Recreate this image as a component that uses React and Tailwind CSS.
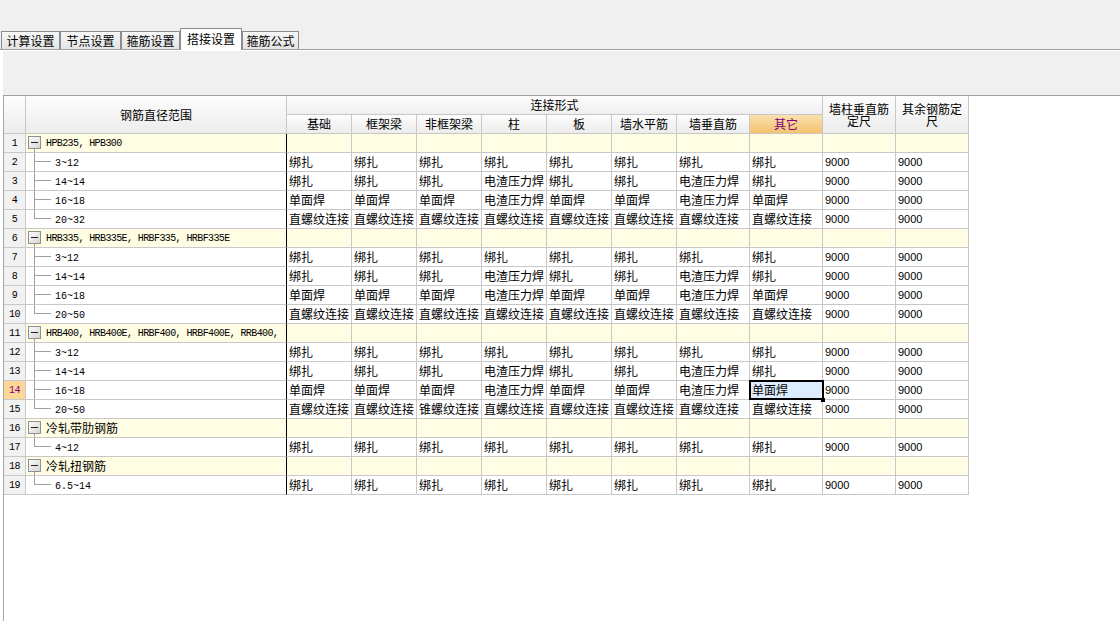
import React from 'react';

const CJK = "font-['Noto_Sans_CJK_SC',sans-serif]";
const COLS = 'grid grid-cols-[22px_261px_65px_65px_65px_65px_65px_65px_73px_73px_73px_73px] w-[965px]';

const B = '绑扎';
const D = '电渣压力焊';
const S = '单面焊';
const Z = '直螺纹连接';

const ROW_3_12 = [B, B, B, B, B, B, B, B];
const ROW_14 = [B, B, B, D, B, B, D, B];
const ROW_16 = [S, S, S, D, S, S, D, S];
const ROW_20 = [Z, Z, Z, Z, Z, Z, Z, Z];

const rows = [
	{ n: 1, group: 'HPB235, HPB300', latin: true },
	{ n: 2, label: '3~12', vals: ROW_3_12 },
	{ n: 3, label: '14~14', vals: ROW_14 },
	{ n: 4, label: '16~18', vals: ROW_16 },
	{ n: 5, label: '20~32', vals: ROW_20, last: true },
	{ n: 6, group: 'HRB335, HRB335E, HRBF335, HRBF335E', latin: true },
	{ n: 7, label: '3~12', vals: ROW_3_12 },
	{ n: 8, label: '14~14', vals: ROW_14 },
	{ n: 9, label: '16~18', vals: ROW_16 },
	{ n: 10, label: '20~50', vals: ROW_20, last: true },
	{ n: 11, group: 'HRB400, HRB400E, HRBF400, HRBF400E, RRB400,', latin: true },
	{ n: 12, label: '3~12', vals: ROW_3_12 },
	{ n: 13, label: '14~14', vals: ROW_14 },
	{ n: 14, label: '16~18', vals: ROW_16, selected: 7 },
	{ n: 15, label: '20~50', vals: [Z, Z, '锥螺纹连接', Z, Z, Z, Z, Z], last: true },
	{ n: 16, group: '冷轧带肋钢筋' },
	{ n: 17, label: '4~12', vals: ROW_3_12, last: true },
	{ n: 18, group: '冷轧扭钢筋' },
	{ n: 19, label: '6.5~14', vals: ROW_3_12, last: true },
];

const tabs = [
	{ label: '计算设置', w: 'w-[59px] ml-[1px]' },
	{ label: '节点设置', w: 'w-[61px]' },
	{ label: '箍筋设置', w: 'w-[59px]' },
	{ label: '搭接设置', w: 'w-[62px]', active: true },
	{ label: '箍筋公式', w: 'w-[57px]' },
];

const subHeaders = ['基础', '框架梁', '非框架梁', '柱', '板', '墙水平筋', '墙垂直筋', '其它'];

function GroupBox() {
	return (
		<svg width="20" height="18" className="shrink-0">
			<defs>
				<linearGradient id="boxfill" x1="0" y1="0" x2="1" y2="1">
					<stop offset="0" stopColor="#ffffff" />
					<stop offset="1" stopColor="#d4d4d4" />
				</linearGradient>
			</defs>
			<line x1="8.5" y1="14" x2="8.5" y2="18" stroke="#a0a0a0" />
			<rect x="2.5" y="2.5" width="12" height="12" fill="url(#boxfill)" stroke="#909090" />
			<line x1="5" y1="8.5" x2="12" y2="8.5" stroke="#222" />
		</svg>
	);
}

function ChildLines({ last }) {
	return (
		<svg width="29" height="18" className="shrink-0">
			<line x1="8.5" y1="0" x2="8.5" y2={last ? 9 : 18} stroke="#a0a0a0" />
			<line x1="8.5" y1="8.5" x2="25" y2="8.5" stroke="#a0a0a0" />
		</svg>
	);
}

function DataRow({ row }) {
	const isGroup = !!row.group;
	const cellBg = isGroup ? 'bg-[#fffde3]' : 'bg-white';
	const numBg = row.selected !== undefined ? 'bg-[#fdd797] text-[#800080]' : 'bg-[#f2f2f2] text-black';
	const vals = isGroup ? ['', '', '', '', '', '', '', '', '', ''] : [...row.vals, '9000', '9000'];

	return (
		<div className={`${COLS} h-[19px]`}>
			<div className={`border-r border-b border-[#c8c8c8] flex items-center justify-center font-['Liberation_Mono',monospace] text-[10px] tracking-[-0.5px] ${numBg}`}>
				{row.n}
			</div>
			<div className={`border-r border-r-black border-b border-b-[#c8c8c8] flex items-center overflow-hidden whitespace-nowrap ${cellBg}`}>
				{isGroup ? (
					<>
						<GroupBox />
						<span
							className={
								row.latin
									? "font-['Liberation_Mono',monospace] text-[10px] tracking-[-0.6px] pt-[1px]"
									: `${CJK} text-[12px]`
							}
						>
							{row.group}
						</span>
					</>
				) : (
					<>
						<ChildLines last={row.last} />
						<span className="font-['Liberation_Mono',monospace] text-[10px] pt-[2px]">{row.label}</span>
					</>
				)}
			</div>
			{vals.map((v, i) => {
				const isNum = i >= 8;
				const selected = row.selected === i;
				return (
					<div
						key={i}
						className={`relative border-r border-b border-[#c8c8c8] flex items-center pl-[2px] whitespace-nowrap overflow-visible ${
							selected ? 'bg-[#deedfe] z-10' : cellBg
						} ${isNum ? "font-['Liberation_Sans',sans-serif] text-[11px]" : `${CJK} text-[12px]`}`}
					>
						{v}
						{selected && (
							<>
								<div className="absolute -left-[1px] -top-[1px] w-[75px] h-[20px] border-2 border-black pointer-events-none" />
								<div className="absolute -right-[3px] -bottom-[3px] w-[4px] h-[4px] bg-black" />
							</>
						)}
					</div>
				);
			})}
		</div>
	);
}

export default function App() {
	return (
		<div className={`w-[1120px] h-[621px] overflow-hidden bg-white flex flex-col text-black ${CJK}`}>
			{/* Tab strip */}
			<div className="h-[50px] shrink-0 bg-[#f0f0f0] border-b border-[#a0a0a0] flex items-end">
				{tabs.map((t) =>
					t.active ? (
						<div
							key={t.label}
							className={`${t.w} h-[22px] -mb-[1px] relative z-10 bg-white border border-b-0 border-[#8c8c8c] flex justify-center pt-[2px] text-[12px] leading-[16px]`}
						>
							{t.label}
						</div>
					) : (
						<div
							key={t.label}
							className={`${t.w} h-[18px] bg-linear-to-b from-[#f7f7f7] to-[#e4e4e4] border border-b-0 border-[#8c8c8c] flex items-center justify-center text-[12px] leading-[16px]`}
						>
							{t.label}
						</div>
					)
				)}
			</div>

			{/* Toolbar panel */}
			<div className="ml-[3px] mt-[1px] h-[45px] shrink-0 bg-[#f0f0f0] border-b border-[#a0a0a0]" />

			{/* Grid */}
			<div className="ml-[3px] flex-1 border-l border-[#a8a8a8] bg-white">
				<div className={`${COLS} grid-rows-[19px_19px] text-[12px]`}>
					<div className="row-span-2 border-r border-b border-[#c8c8c8] bg-linear-to-b from-[#fdfdfd] to-[#ececec]" />
					<div className="row-span-2 border-r border-b border-[#c8c8c8] bg-linear-to-b from-[#fdfdfd] to-[#ececec] flex items-center justify-center">
						钢筋直径范围
					</div>
					<div className="col-span-8 border-r border-b border-[#c8c8c8] bg-linear-to-b from-[#fdfdfd] to-[#efefef] flex items-center justify-center">
						连接形式
					</div>
					<div className="row-span-2 border-r border-b border-[#c8c8c8] bg-linear-to-b from-[#fdfdfd] to-[#ececec] flex items-center justify-center text-center px-[4px] leading-[12px]">
						墙柱垂直筋定尺
					</div>
					<div className="row-span-2 border-r border-b border-[#c8c8c8] bg-linear-to-b from-[#fdfdfd] to-[#ececec] flex items-center justify-center text-center px-[4px] leading-[12px]">
						其余钢筋定尺
					</div>
					{subHeaders.map((h) =>
						h === '其它' ? (
							<div
								key={h}
								className="border-r border-b border-[#c8c8c8] bg-linear-to-b from-[#fae1ad] to-[#f3c26d] text-[#800080] flex items-center justify-center"
							>
								{h}
							</div>
						) : (
							<div
								key={h}
								className="border-r border-b border-[#c8c8c8] bg-linear-to-b from-[#fdfdfd] to-[#ececec] flex items-center justify-center"
							>
								{h}
							</div>
						)
					)}
				</div>

				{rows.map((row) => (
					<DataRow key={row.n} row={row} />
				))}
			</div>
		</div>
	);
}
